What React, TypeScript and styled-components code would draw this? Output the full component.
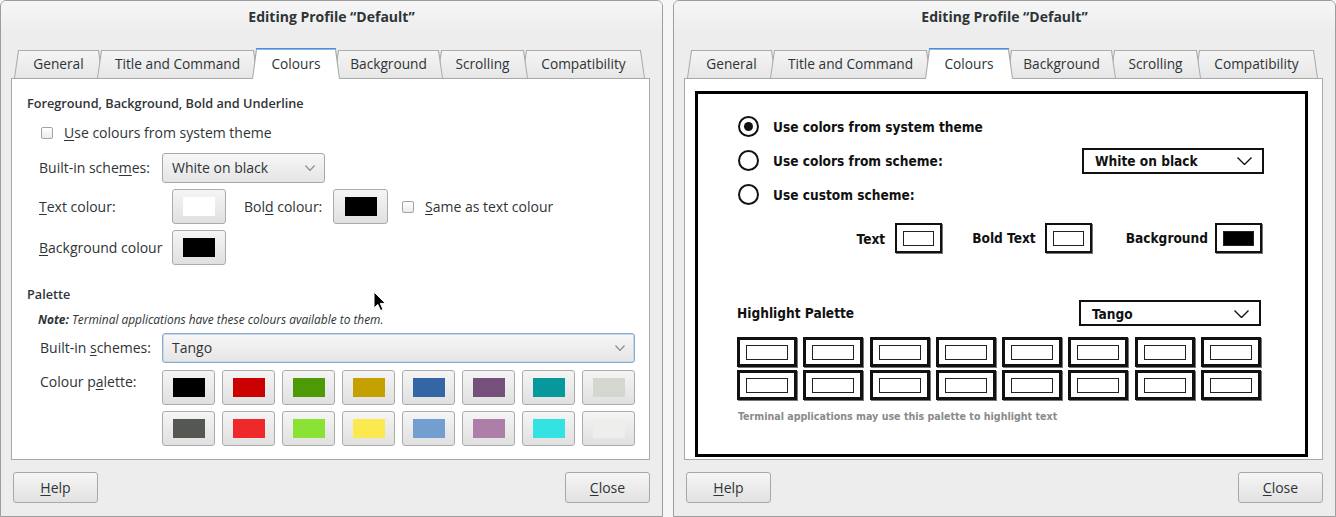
import React from "react";
import styled, { createGlobalStyle } from "styled-components";

const GlobalStyle = createGlobalStyle`
  html, body { margin: 0; padding: 0; background: #f6f6f6; }
  body {
    font-family: "Open Sans", "Noto Sans", sans-serif;
    width: 1336px; height: 517px; overflow: hidden;
    color: #2e3436;
  }
  * { box-sizing: border-box; }
`;

const Page = styled.div`
  display: flex;
  gap: 10px;
  width: 1336px;
  height: 517px;
`;

const Window = styled.section`
  position: relative;
  width: 663px;
  height: 517px;
  flex: none;
  display: flex;
  flex-direction: column;
  background: #ededed;
  border: 1px solid #9d9d9d;
  border-radius: 6px 6px 0 0;
  overflow: hidden;
`;

const TitleBar = styled.header`
  height: 31px;
  flex: none;
  display: flex;
  align-items: center;
  justify-content: center;
  font-weight: 700;
  font-size: 14px;
  color: #2e3436;
  background: linear-gradient(#f6f6f6, #ededed);
`;

const WindowBody = styled.div`
  flex: 1;
  display: flex;
  flex-direction: column;
  padding: 0 12px 0 10px;
`;

const TabStrip = styled.div`
  position: relative;
  z-index: 2;
  height: 31px;
  margin-top: 16px;
  margin-bottom: -1px;
  padding-left: 3px;
  display: flex;
  align-items: flex-end;
`;

const trap = "polygon(0 100%, 4px 0, calc(100% - 4px) 0, 100% 100%)";

const Tab = styled.div<{ $active?: boolean; $z: number; $w: number }>`
  position: relative;
  z-index: ${(p) => p.$z};
  flex: none;
  width: ${(p) => p.$w}px;
  height: ${(p) => (p.$active ? 31 : 28)}px;
  margin-bottom: ${(p) => (p.$active ? 0 : 1)}px;
  display: flex;
  align-items: center;
  justify-content: center;
  font-size: 13.7px;
  padding-bottom: ${(p) => (p.$active ? 1 : 2)}px;
  color: #2e3436;
  & + & { margin-left: -6px; }
  &::before {
    content: "";
    position: absolute;
    inset: 0;
    z-index: -1;
    clip-path: ${trap};
    background: ${(p) =>
      p.$active
        ? "linear-gradient(#4a90d9 0 1px, #8db6e6 1px 2px, #a9a9a9 2px)"
        : "#acacac"};
  }
  &::after {
    content: "";
    position: absolute;
    inset: ${(p) => (p.$active ? "2px 1px 0 1px" : "1px 1px 0 1px")};
    z-index: -1;
    clip-path: ${trap};
    background: ${(p) =>
      p.$active ? "#ffffff" : "linear-gradient(#f5f5f5, #e6e6e6)"};
  }
`;

const Panel = styled.div`
  position: relative;
  z-index: 1;
  height: 382px;
  flex: none;
  background: #ffffff;
  border: 1px solid #a8a8a8;
  display: flex;
  flex-direction: column;
`;

const FormPanel = styled(Panel)`
  padding: 15px 14px 0 15px;
`;

const Footer = styled.div`
  display: flex;
  justify-content: space-between;
  padding: 12px 0 0 2px;
`;

const PushButton = styled.button`
  width: 85px;
  height: 31px;
  border: 1px solid #a8a8a8;
  border-radius: 3px;
  background: linear-gradient(#f6f6f6, #e1e1e1);
  font-family: inherit;
  font-size: 14px;
  color: #2e3436;
  padding: 0;
`;

const Mn = styled.span`
  text-decoration: underline;
  text-underline-offset: 2px;
  text-decoration-thickness: 1px;
`;

const Heading = styled.div<{ $mt?: number }>`
  font-weight: 600;
  font-size: 12.7px;
  line-height: 18px;
  margin-top: ${(p) => p.$mt ?? 0}px;
`;

const FormRow = styled.div<{ $mt: number; $indent?: number; $top?: boolean }>`
  display: flex;
  align-items: ${(p) => (p.$top ? "flex-start" : "center")};
  margin-top: ${(p) => p.$mt}px;
  padding-left: ${(p) => p.$indent ?? 12}px;
  font-size: 14px;
  line-height: 18px;
`;

const FieldLabel = styled.span<{ $w?: number; $ml?: number; $mt?: number }>`
  flex: none;
  width: ${(p) => (p.$w ? `${p.$w}px` : "auto")};
  margin-left: ${(p) => p.$ml ?? 0}px;
  margin-top: ${(p) => p.$mt ?? 0}px;
  white-space: nowrap;
`;

const Check = styled.span<{ $ml?: number }>`
  flex: none;
  width: 12px;
  height: 12px;
  margin-left: ${(p) => p.$ml ?? 0}px;
  border: 1px solid #a3a3a3;
  border-radius: 2px;
  background: linear-gradient(#ffffff, #ebebeb);
`;

const Combo = styled.div<{ $w: number; $focus?: boolean }>`
  flex: none;
  width: ${(p) => p.$w}px;
  height: 30px;
  display: flex;
  align-items: center;
  justify-content: space-between;
  padding: 0 9px 0 9px;
  border: 1px solid ${(p) => (p.$focus ? "#8fa9cb" : "#a8a8a8")};
  border-radius: 3px;
  background: linear-gradient(#f7f7f7, #e5e5e5);
  box-shadow: ${(p) => (p.$focus ? "inset 0 0 0 1px #c6d9f0" : "none")};
  font-size: 14px;
`;

const ColorButton = styled.div<{ $w?: number; $ml?: number }>`
  flex: none;
  width: ${(p) => p.$w ?? 54}px;
  height: 35px;
  margin-left: ${(p) => p.$ml ?? 0}px;
  display: flex;
  align-items: center;
  justify-content: center;
  border: 1px solid #ababab;
  border-radius: 3px;
  background: linear-gradient(#f5f5f5, #e0e0e0);
`;

const Swatch = styled.span<{ $c: string }>`
  width: 32px;
  height: 19px;
  background: ${(p) => p.$c};
`;

const Note = styled.div<{ $mt: number }>`
  margin-top: ${(p) => p.$mt}px;
  padding-left: 11px;
  font-size: 11.9px;
  line-height: 14px;
  font-style: italic;
  & b { font-weight: 700; }
`;

const PaletteGrid = styled.div`
  display: grid;
  grid-template-columns: repeat(8, 53px);
  grid-auto-rows: 35px;
  column-gap: 7px;
  row-gap: 6px;
`;

const Cursor = styled.svg`
  position: absolute;
  left: 372px;
  top: 290px;
  z-index: 5;
`;

/* ---------- mockup (right) ---------- */

const MockPanel = styled(Panel)`
  padding: 12px 14px 0 10px;
`;

const MockFrame = styled.div`
  height: 366px;
  border: 3px solid #000;
  display: flex;
  flex-direction: column;
  font-family: "DejaVu Sans Condensed", "DejaVu Sans", sans-serif;
  font-stretch: condensed;
  font-weight: 700;
  font-size: 13.6px;
  color: #111;
`;

const RadioRow = styled.div<{ $mt: number }>`
  display: flex;
  align-items: center;
  height: 21px;
  margin-top: ${(p) => p.$mt}px;
  padding: 0 41px 0 40px;
`;

const Radio = styled.span<{ $on?: boolean }>`
  flex: none;
  width: 21px;
  height: 21px;
  margin-right: 14px;
  border: 2px solid #111;
  border-radius: 50%;
  display: flex;
  align-items: center;
  justify-content: center;
  &::after {
    content: "";
    width: 9px;
    height: 9px;
    border-radius: 50%;
    background: ${(p) => (p.$on ? "#111" : "transparent")};
  }
`;

const MockSelect = styled.div<{ $ml?: string }>`
  flex: none;
  width: 182px;
  height: 26px;
  margin-left: ${(p) => p.$ml ?? "0"};
  display: flex;
  align-items: center;
  justify-content: space-between;
  padding: 1px 10px 0 11px;
  border: 2px solid #111;
`;

const WellRow = styled.div`
  display: flex;
  align-items: center;
  justify-content: flex-end;
  margin-top: 18px;
  padding-right: 43px;
`;

const WellLabel = styled.span<{ $ml?: number; $gap: number; $dy?: number }>`
  margin-left: ${(p) => p.$ml ?? 0}px;
  margin-right: ${(p) => p.$gap}px;
  position: relative;
  top: ${(p) => p.$dy ?? 0}px;
`;

const Well = styled.div<{ $big?: boolean }>`
  flex: none;
  width: ${(p) => (p.$big ? 60 : 47)}px;
  height: 30px;
  display: flex;
  align-items: center;
  justify-content: center;
  border: ${(p) => (p.$big ? 3 : 2)}px solid #111;
  box-shadow: 1px 1px 0 #777;
`;

const WellInner = styled.span<{ $fill?: string; $big?: boolean }>`
  width: ${(p) => (p.$big ? 42 : 31)}px;
  height: 15px;
  border: 1.5px solid #222;
  background: ${(p) => p.$fill ?? "#fff"};
`;

const HighlightRow = styled.div`
  display: flex;
  align-items: center;
  justify-content: space-between;
  margin-top: 47px;
  padding: 0 44px 0 39px;
`;

const MockGrid = styled.div`
  display: grid;
  grid-template-columns: repeat(8, 60px);
  grid-auto-rows: 30px;
  column-gap: 6.3px;
  row-gap: 3px;
  margin-top: 11px;
  padding-left: 39px;
`;

const Caption = styled.div`
  margin-top: 10px;
  padding-left: 40px;
  font-size: 10.6px;
  line-height: 13px;
  color: #8a8a8a;
`;

/* ---------- data ---------- */

const TABS = [
  { label: "General", w: 89 },
  { label: "Title and Command", w: 161 },
  { label: "Colours", w: 88 },
  { label: "Background", w: 109 },
  { label: "Scrolling", w: 91 },
  { label: "Compatibility", w: 123 },
];
const ACTIVE = 2;

const TANGO = [
  "#000000", "#cc0000", "#4e9a06", "#c4a000", "#3465a4", "#75507b", "#06989a", "#d3d7cf",
  "#555753", "#ef2929", "#8ae234", "#fce94f", "#729fcf", "#ad7fa8", "#34e2e2", "#eeeeec",
];

const Chevron = ({ c = "#8b8e8f", w = 10, h = 6, sw = 1.2 }: { c?: string; w?: number; h?: number; sw?: number }) => (
  <svg width={w} height={h} viewBox={`0 0 ${w} ${h}`}>
    <polyline points={`0.5,0.5 ${w / 2},${h - 0.5} ${w - 0.5},0.5`} fill="none" stroke={c} strokeWidth={sw} />
  </svg>
);

const Tabs = () => (
  <TabStrip>
    {TABS.map((t, i) => (
      <Tab
        key={t.label}
        $w={t.w}
        $active={i === ACTIVE}
        $z={i === ACTIVE ? 20 : i < ACTIVE ? i + 1 : 10 - i}
      >
        {t.label}
      </Tab>
    ))}
  </TabStrip>
);

const Buttons = () => (
  <Footer>
    <PushButton>
      <Mn>H</Mn>elp
    </PushButton>
    <PushButton>
      <Mn>C</Mn>lose
    </PushButton>
  </Footer>
);

const LeftDialog = () => (
  <Window>
    <TitleBar>Editing Profile “Default”</TitleBar>
    <WindowBody>
      <Tabs />
      <FormPanel>
        <Heading>Foreground, Background, Bold and Underline</Heading>
        <FormRow $mt={12} $indent={14}>
          <Check />
          <FieldLabel $ml={11}>
            <Mn>U</Mn>se colours from system theme
          </FieldLabel>
        </FormRow>
        <FormRow $mt={11}>
          <FieldLabel $w={123}>
            Built-in sche<Mn>m</Mn>es:
          </FieldLabel>
          <Combo $w={163}>
            <span>White on black</span>
            <Chevron />
          </Combo>
        </FormRow>
        <FormRow $mt={6}>
          <FieldLabel $w={133}>
            <Mn>T</Mn>ext colour:
          </FieldLabel>
          <ColorButton>
            <Swatch $c="#ffffff" />
          </ColorButton>
          <FieldLabel $w={89} $ml={18}>
            Bol<Mn>d</Mn> colour:
          </FieldLabel>
          <ColorButton $w={55}>
            <Swatch $c="#000000" />
          </ColorButton>
          <Check $ml={14} />
          <FieldLabel $ml={11}>
            <Mn>S</Mn>ame as text colour
          </FieldLabel>
        </FormRow>
        <FormRow $mt={6}>
          <FieldLabel $w={133}>
            <Mn>B</Mn>ackground colour
          </FieldLabel>
          <ColorButton>
            <Swatch $c="#000000" />
          </ColorButton>
        </FormRow>

        <Heading $mt={20}>Palette</Heading>
        <Note $mt={9}>
          <b>Note:</b> Terminal applications have these colours available to them.
        </Note>
        <FormRow $mt={7} $indent={13}>
          <FieldLabel $w={122}>
            Built-in <Mn>s</Mn>chemes:
          </FieldLabel>
          <Combo $w={473} $focus>
            <span>Tango</span>
            <Chevron />
          </Combo>
        </FormRow>
        <FormRow $mt={7} $indent={13} $top>
          <FieldLabel $w={122} $mt={3}>
            Colour p<Mn>a</Mn>lette:
          </FieldLabel>
          <PaletteGrid>
            {TANGO.map((c, i) => (
              <ColorButton key={i} $w={53}>
                <Swatch $c={c} />
              </ColorButton>
            ))}
          </PaletteGrid>
        </FormRow>
      </FormPanel>
      <Buttons />
    </WindowBody>
    <Cursor width="14" height="21" viewBox="0 0 14 21">
      <path d="M1 1 L1 17 L4.8 13.4 L7.6 19.6 L10 18.5 L7.3 12.4 L12.4 12.4 Z" fill="#000" stroke="#fff" strokeWidth="1" strokeLinejoin="round" />
    </Cursor>
  </Window>
);

const RightDialog = () => (
  <Window>
    <TitleBar>Editing Profile “Default”</TitleBar>
    <WindowBody>
      <Tabs />
      <MockPanel>
        <MockFrame>
          <RadioRow $mt={22}>
            <Radio $on />
            <span>Use colors from system theme</span>
          </RadioRow>
          <RadioRow $mt={13}>
            <Radio />
            <span>Use colors from scheme:</span>
            <MockSelect $ml="auto">
              <span>White on black</span>
              <Chevron c="#111" w={15} h={8} sw={1.4} />
            </MockSelect>
          </RadioRow>
          <RadioRow $mt={13}>
            <Radio />
            <span>Use custom scheme:</span>
          </RadioRow>
          <WellRow>
            <WellLabel $gap={10} $dy={1}>Text</WellLabel>
            <Well>
              <WellInner />
            </Well>
            <WellLabel $ml={30} $gap={9}>Bold Text</WellLabel>
            <Well>
              <WellInner />
            </Well>
            <WellLabel $ml={34} $gap={7}>Background</WellLabel>
            <Well>
              <WellInner $fill="#000" />
            </Well>
          </WellRow>
          <HighlightRow>
            <span>Highlight Palette</span>
            <MockSelect>
              <span>Tango</span>
              <Chevron c="#111" w={15} h={8} sw={1.4} />
            </MockSelect>
          </HighlightRow>
          <MockGrid>
            {Array.from({ length: 16 }).map((_, i) => (
              <Well key={i} $big>
                <WellInner $big />
              </Well>
            ))}
          </MockGrid>
          <Caption>Terminal applications may use this palette to highlight text</Caption>
        </MockFrame>
      </MockPanel>
      <Buttons />
    </WindowBody>
  </Window>
);

export default function App() {
  return (
    <>
      <GlobalStyle />
      <Page>
        <LeftDialog />
        <RightDialog />
      </Page>
    </>
  );
}
